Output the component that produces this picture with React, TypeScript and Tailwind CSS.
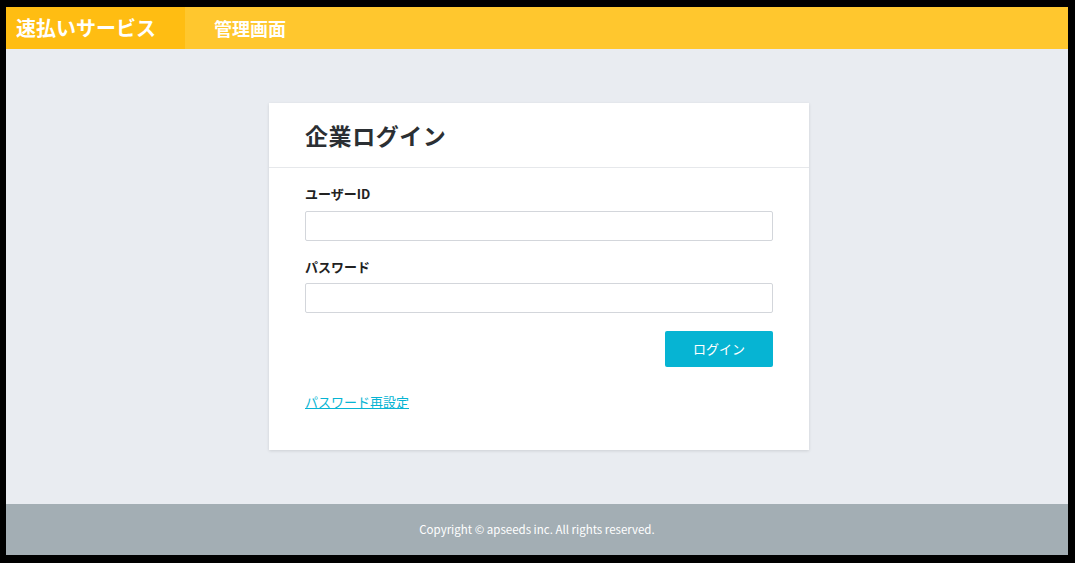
export default function App() {
  const font = { fontFamily: '"Noto Sans CJK JP", "Noto Sans", sans-serif' }

  return (
    <div className="w-[1075px] h-[563px] bg-black pt-[7px] pl-[6px] pr-[7px] pb-[8px]" style={font}>
      <div className="flex flex-col h-full bg-[#e9ecf1]">
        {/* HEADER */}
        <header className="flex h-[42px] shrink-0 bg-[#ffc72e] text-white font-bold">
          <div className="w-[179px] bg-[#ffbd12] flex items-center pl-[10px] text-[20px]">
            速払いサービス
          </div>
          <div className="flex items-center pl-[29px] text-[18px]">管理画面</div>
        </header>

        {/* MAIN */}
        <main className="flex-1 flex justify-center pt-[54px] pl-[4px]">
          <div className="w-[540px] h-[347px] bg-white shadow-[0_1px_3px_rgba(0,0,0,0.12)]">
            <div className="h-[65px] border-b border-[#e6e8eb] flex items-center px-[36px]">
              <h1 className="text-[23px] font-bold text-[#2b2f33] tracking-wide">企業ログイン</h1>
            </div>
            <div className="px-[36px] pt-[16px]">
              <label className="block text-[13px] font-bold text-[#222] leading-[20px]">ユーザーID</label>
              <input type="text" className="mt-[7px] block w-full h-[30px] border border-[#d3d6db] rounded-[2px] outline-none" />
              <label className="block mt-[16px] text-[13px] font-bold text-[#222] leading-[20px]">パスワード</label>
              <input type="password" className="mt-[6px] block w-full h-[30px] border border-[#d3d6db] rounded-[2px] outline-none" />
              <div className="flex justify-end mt-[18px]">
                <button className="w-[108px] h-[36px] bg-[#06b4d3] text-white text-[13px] rounded-[2px]">
                  ログイン
                </button>
              </div>
              <a href="#" className="block mt-[25px] text-[13px] text-[#06b4d3] underline leading-[20px] w-fit">
                パスワード再設定
              </a>
            </div>
          </div>
        </main>

        {/* FOOTER */}
        <footer className="h-[51px] shrink-0 bg-[#a3aeb4] flex items-center justify-center text-white text-[11.5px]">
          Copyright © apseeds inc. All rights reserved.
        </footer>
      </div>
    </div>
  )
}
